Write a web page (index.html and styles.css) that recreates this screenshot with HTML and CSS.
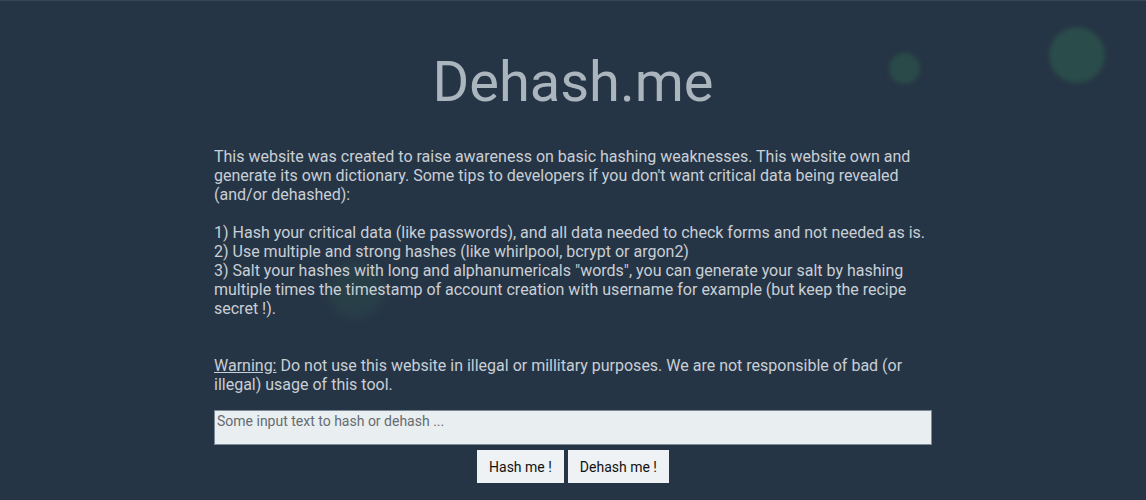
FILE: index.html
```html
<!DOCTYPE html>
<html>
<head>
<meta charset="utf-8">
<link rel="stylesheet" href="styles.css">
</head>
<body>
<div class="bubble b1"></div>
<div class="bubble b2"></div>
<div class="bubble b3"></div>
<main class="wrap">
  <h1 class="title">Dehash.me</h1>
  <p class="intro">This website was created to raise awareness on basic hashing weaknesses. This website own and generate its own dictionary. Some tips to developers if you don't want critical data being revealed (and/or dehashed):<br><br>1) Hash your critical data (like passwords), and all data needed to check forms and not needed as is.<br>2) Use multiple and strong hashes (like whirlpool, bcrypt or argon2)<br>3) Salt your hashes with long and alphanumericals "words", you can generate your salt by hashing multiple times the timestamp of account creation with username for example (but keep the recipe secret !).<br><br><br><u class="warn">Warning:</u> Do not use this website in illegal or millitary purposes. We are not responsible of bad (or illegal) usage of this tool.</p>
  <form class="form">
    <textarea class="input" placeholder="Some input text to hash or dehash ..."></textarea>
    <div class="actions">
      <button type="button" class="btn">Hash me !</button>
      <button type="button" class="btn">Dehash me !</button>
    </div>
  </form>
</main>
</body>
</html>
```

FILE: styles.css
```css
html, body {
  margin: 0;
  padding: 0;
}
body {
  background: #263545;
  font-family: Roboto, "Liberation Sans", sans-serif;
  color: #c9cfd6;
  min-height: 500px;
  overflow: hidden;
  border-top: 1px solid #3a4553;
  box-sizing: border-box;
}
.bubble {
  position: absolute;
  border-radius: 50%;
  background: #2b4a4b;
  filter: blur(2px);
}
.b1 { left: 1049px; top: 27px; width: 56px; height: 56px; background: #2a4c4a; }
.b2 { left: 889px; top: 53px; width: 31px; height: 31px; background: #2a4a49; }
.b3 { left: 328px; top: 262px; width: 56px; height: 56px; background: #283f48; filter: blur(4px); }
.wrap {
  position: relative;
  width: 718px;
  margin: 0 auto;
  padding-top: 47px;
}
.title {
  margin: 0;
  text-align: center;
  font-size: 56px;
  font-weight: 400;
  line-height: 69px;
  color: #aab5be;
}
.intro {
  margin: 30px 0 0;
  font-size: 16px;
  line-height: 19px;
}
.warn {
  color: #c9cfd6;
}
.form {
  margin-top: 16px;
}
.input {
  display: block;
  box-sizing: border-box;
  width: 718px;
  height: 35px;
  margin: 0;
  padding: 2px 2px;
  border: 1px solid #7c8a96;
  background: #e9eef0;
  font-family: Roboto, "Liberation Sans", sans-serif;
  font-size: 14px;
  resize: none;
}
.input::placeholder {
  color: #666b70;
}
.actions {
  display: flex;
  justify-content: center;
  gap: 4px;
  margin-top: 5px;
}
.btn {
  height: 33px;
  padding: 0 12px;
  border: none;
  background: #eef2f4;
  color: #111;
  font-family: Roboto, "Liberation Sans", sans-serif;
  font-size: 14px;
}
```
